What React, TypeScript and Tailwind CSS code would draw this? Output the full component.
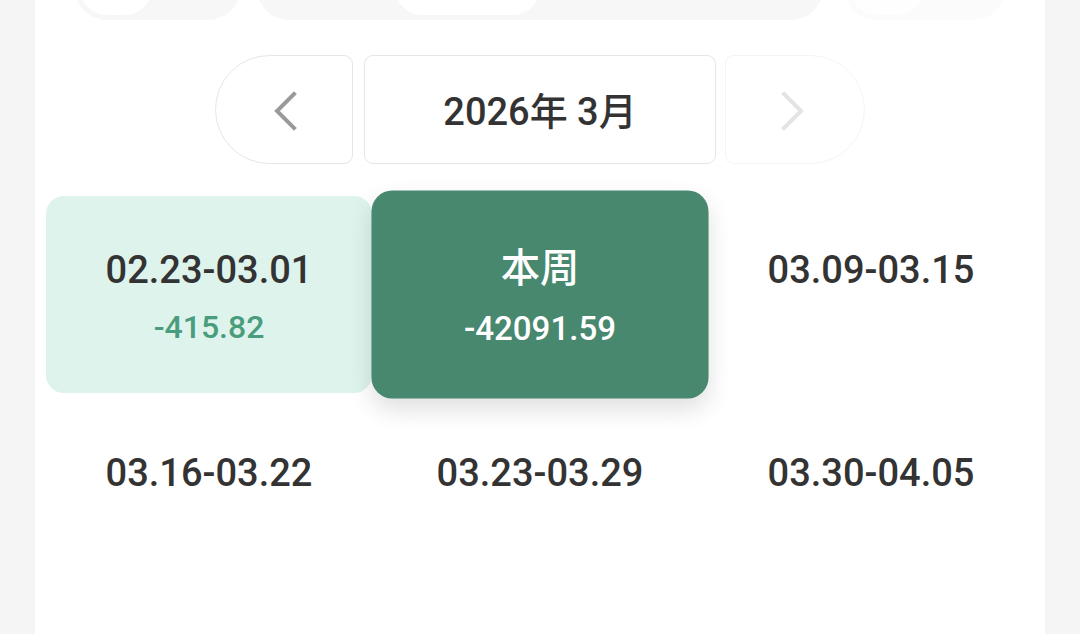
import React from "react";

const weeks = [
  { label: "02.23-03.01", amount: "-415.82", state: "past" },
  { label: "本周", amount: "-42091.59", state: "current" },
  { label: "03.09-03.15", amount: "", state: "future" },
  { label: "03.16-03.22", amount: "", state: "future" },
  { label: "03.23-03.29", amount: "", state: "future" },
  { label: "03.30-04.05", amount: "", state: "future" },
];

function Chevron({ dir, color }: { dir: "left" | "right"; color: string }) {
  return (
    <svg width="28" height="40" viewBox="0 0 28 40" fill="none">
      {dir === "left" ? (
        <path d="M23 3 L6 20 L23 37" stroke={color} strokeWidth="4" strokeLinecap="square" strokeLinejoin="miter" />
      ) : (
        <path d="M5 3 L22 20 L5 37" stroke={color} strokeWidth="4" strokeLinecap="square" strokeLinejoin="miter" />
      )}
    </svg>
  );
}

export default function App() {
  return (
    <div
      className="w-[1080px] h-[634px] overflow-hidden bg-[#f5f5f5] flex justify-center"
      style={{ fontFamily: 'Roboto, "Noto Sans CJK SC", sans-serif' }}
    >
      <div className="w-[1010px] h-full bg-white flex flex-col">
        {/* top segmented tabs (scrolled off) */}
        <div className="mt-[-44px] h-[64px] flex items-stretch px-[40px] gap-[17px]">
          <div className="w-[165px] rounded-[40px] bg-[#f7f7f7] flex items-stretch p-[5px]">
            <div className="w-[72px] rounded-full bg-white" />
          </div>
          <div className="w-[566px] rounded-[40px] bg-[#f7f7f7] flex items-stretch p-[5px] pl-[138px]">
            <div className="w-[145px] rounded-[34px] bg-white" />
          </div>
          <div className="ml-[5px] w-[160px] rounded-[40px] bg-[#fbfbfb] flex items-stretch p-[5px]">
            <div className="w-[75px] rounded-full bg-[#fefefe]" />
          </div>
        </div>

        {/* month navigator */}
        <div className="mt-[35px] flex justify-center items-stretch h-[109px]">
          <button className="w-[138px] rounded-l-[55px] rounded-r-[9px] border border-[#e6e6e6] bg-white flex items-center justify-center pl-[1px] pt-[3px]">
            <Chevron dir="left" color="#9a9a9a" />
          </button>
          <div className="ml-[11px] w-[352px] rounded-[9px] border border-[#e6e6e6] bg-white flex items-center justify-center pt-[5px] text-[38px] font-medium text-[#333333]">
            2026年 3月
          </div>
          <button className="ml-[9px] w-[140px] rounded-r-[55px] rounded-l-[9px] border border-[#f4f4f4] bg-white flex items-center justify-center pr-[4px] pt-[3px]">
            <Chevron dir="right" color="#e4e4e4" />
          </button>
        </div>

        {/* weeks grid */}
        <div className="mt-[32px] px-[11px] grid grid-cols-3 gap-x-[5px] gap-y-[6px]">
          {weeks.map((w) => {
            const base = "h-[197px] pt-[5px] flex flex-col items-center justify-center gap-[10px]";
            const cls =
              w.state === "current"
                ? `${base} rounded-[20px] bg-[#48886f] text-white scale-x-[1.034] scale-y-[1.056] shadow-[0_10px_22px_rgba(0,0,0,0.12)] relative z-10`
                : w.state === "past"
                ? `${base} rounded-[18px] bg-[#ddf3ec] text-[#333333]`
                : `${base} text-[#333333]`;
            return (
              <div key={w.label} className={cls}>
                <div className="h-[50px] leading-[50px] text-[38px] font-medium">{w.label}</div>
                <div
                  className={`h-[44px] leading-[44px] text-[32px] font-medium ${
                    w.state === "current" ? "text-white" : "text-[#4a9d7c]"
                  }`}
                >
                  {w.amount}
                </div>
              </div>
            );
          })}
        </div>
      </div>
    </div>
  );
}
